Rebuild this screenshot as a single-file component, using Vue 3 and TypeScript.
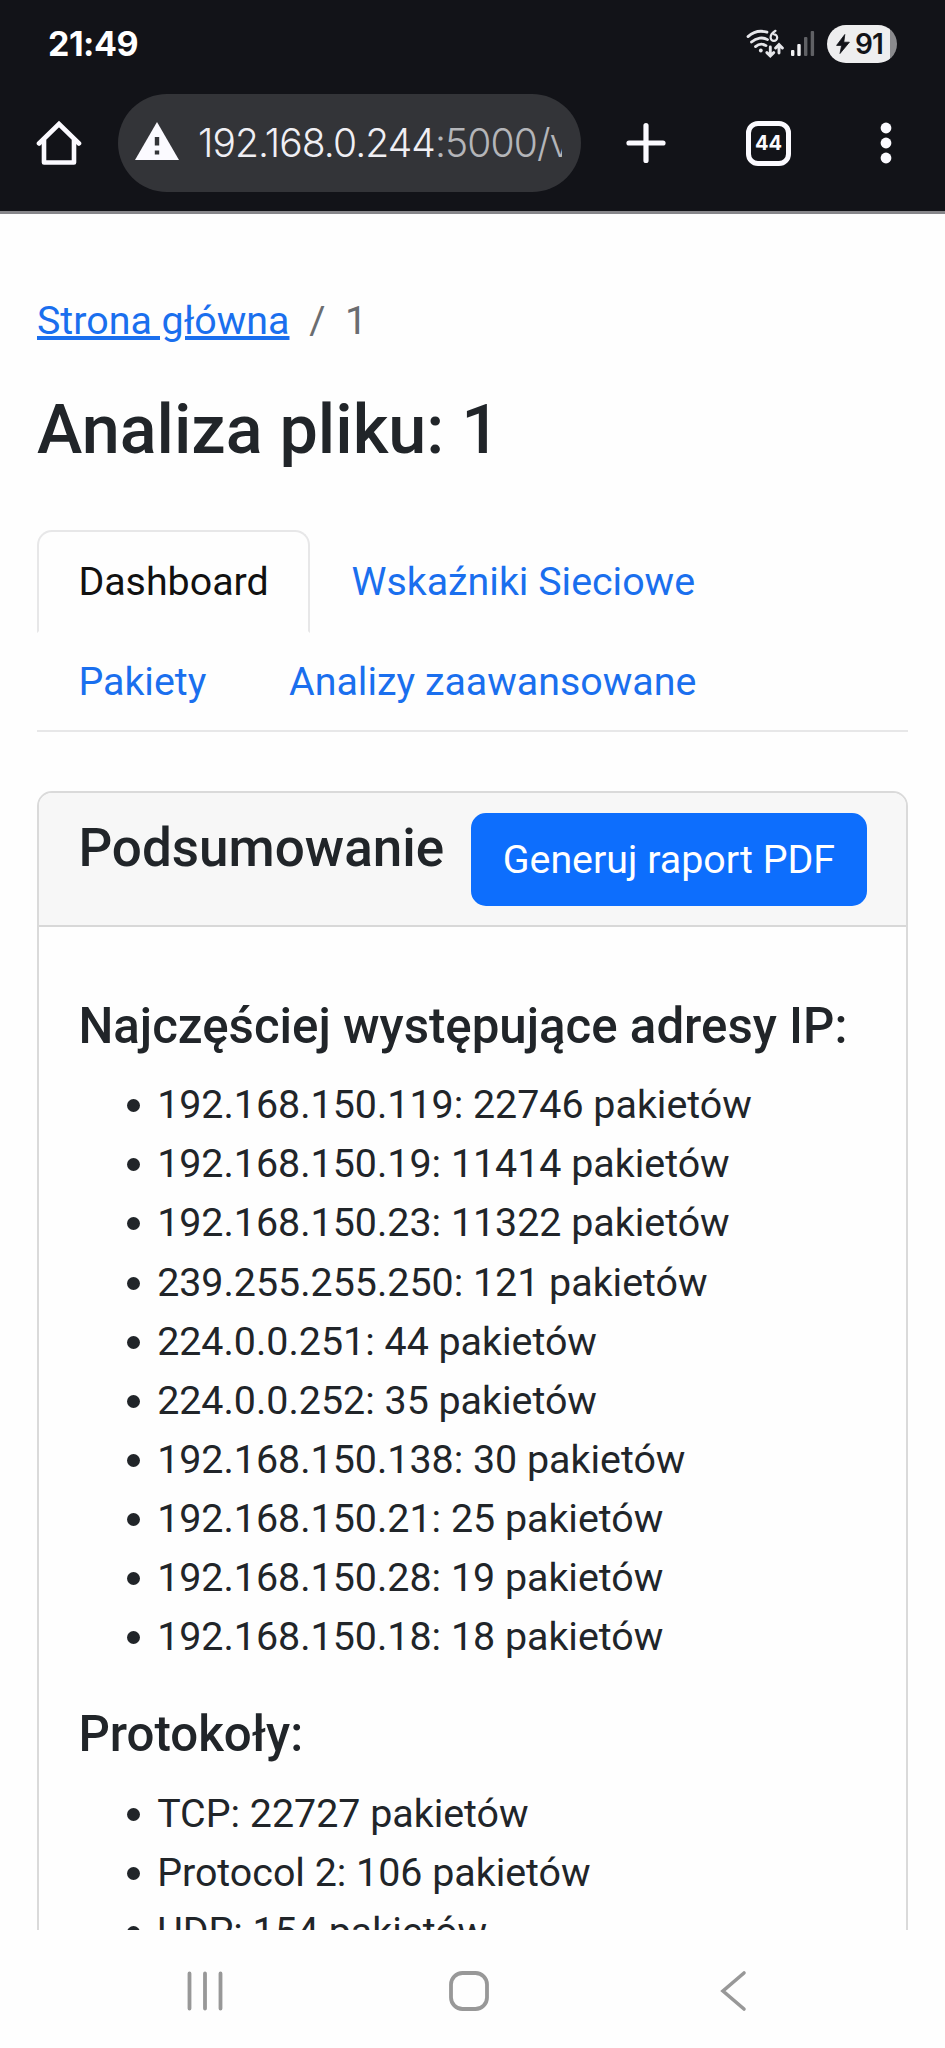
<script setup lang="ts">
interface Entry {
  label: string
  packets: number
}

const addresses: Entry[] = [
  { label: '192.168.150.119', packets: 22746 },
  { label: '192.168.150.19', packets: 11414 },
  { label: '192.168.150.23', packets: 11322 },
  { label: '239.255.255.250', packets: 121 },
  { label: '224.0.0.251', packets: 44 },
  { label: '224.0.0.252', packets: 35 },
  { label: '192.168.150.138', packets: 30 },
  { label: '192.168.150.21', packets: 25 },
  { label: '192.168.150.28', packets: 19 },
  { label: '192.168.150.18', packets: 18 },
]

const protocols: Entry[] = [
  { label: 'TCP', packets: 22727 },
  { label: 'Protocol 2', packets: 106 },
  { label: 'UDP', packets: 154 },
]

const tabs: string[] = ['Dashboard', 'Wskaźniki Sieciowe', 'Pakiety', 'Analizy zaawansowane']
const activeTab = 'Dashboard'
</script>

<template>
  <div class="phone">
    <header class="chrome">
      <div class="status">
        <span class="clock">21:49</span>
        <div class="status-icons">
          <svg class="wifi" width="38" height="30" viewBox="0 0 38 30" fill="none" stroke="#e6e6ea" stroke-linecap="round">
            <path d="M2 7.6C8 2.2 15 1.4 21 3.2" stroke-width="2.8" />
            <path d="M5.5 13C10.5 8.4 17 8 21.5 10.6" stroke-width="2.8" />
            <path d="M9.5 17.6C13 14.6 17 14.8 20 16.6" stroke-width="2.8" />
            <circle cx="14.8" cy="21.5" r="1.9" fill="#e6e6ea" stroke="none" />
            <path d="M29.5 1.8C26.6 3.6 24.6 6 24.6 8.6a3.3 3.3 0 1 0 3.3-3.3" stroke-width="2.2" />
            <path d="M24.3 18v8M20.9 23.6l3.4 3.4 3.4-3.4M33 24v-7.5M29.6 19l3.4-3.4 3.4 3.4" stroke-width="2.9" />
          </svg>
          <svg class="signal" width="26" height="28" viewBox="0 0 26 28">
            <rect x="1" y="20" width="3.4" height="6" rx="1" fill="#f2f2f4" />
            <rect x="7.3" y="14" width="3.4" height="12" rx="1" fill="#f2f2f4" />
            <rect x="14" y="7" width="3.4" height="19" rx="1" fill="#606165" />
            <rect x="20.7" y="1" width="3.4" height="25" rx="1" fill="#606165" />
          </svg>
          <div class="battery">
            <svg width="14" height="20" viewBox="0 0 14 20">
              <path d="M8.8 0.5L0.6 11.4h5L4 19.5L13.4 8.2H7.8z" fill="#121318" stroke="#121318" stroke-width="0.8" />
            </svg>
            <span>91</span>
          </div>
        </div>
      </div>
      <div class="toolbar">
        <svg class="home" width="46" height="46" viewBox="0 0 46 46" fill="none" stroke="#fbfaff" stroke-width="4.6" stroke-linecap="round" stroke-linejoin="round">
          <path d="M3 23.5L23 4L43 23.5" stroke-linejoin="miter" />
          <path d="M8 20v22.5h30V20" />
        </svg>
        <div class="omnibox">
          <svg class="warn" width="46" height="40" viewBox="0 0 46 40">
            <path d="M23 1L45 39H1z" fill="#fbfaff" />
            <path d="M23 16v8.5M23 29.5v4" stroke="#333438" stroke-width="4.4" />
          </svg>
          <span class="url"><span class="host">192.168.0.244</span><span class="path">:5000/v</span></span>
        </div>
        <svg class="plus" width="40" height="42" viewBox="0 0 40 42" stroke="#fbfaff" stroke-width="5.2" stroke-linecap="round">
          <path d="M20 3.5v35M3 21h34" />
        </svg>
        <div class="tab-count">44</div>
        <svg class="kebab" width="12" height="42" viewBox="0 0 12 42" fill="#fbfaff">
          <circle cx="6" cy="6" r="5.4" />
          <circle cx="6" cy="21" r="5.4" />
          <circle cx="6" cy="36" r="5.4" />
        </svg>
      </div>
    </header>

    <main class="page">
      <nav class="breadcrumb">
        <a>Strona główna</a>
        <span class="sep">/</span>
        <span>1</span>
      </nav>
      <h1>Analiza pliku: 1</h1>

      <ul class="tabs">
        <li v-for="tab in tabs" :key="tab" class="tab" :class="{ active: tab === activeTab }">{{ tab }}</li>
      </ul>

      <section class="card">
        <div class="card-header">
          <h4>Podsumowanie</h4>
          <button type="button" class="btn">Generuj raport PDF</button>
        </div>
        <div class="card-body">
          <h5>Najczęściej występujące adresy IP:</h5>
          <ul class="entries">
            <li v-for="entry in addresses" :key="entry.label">{{ entry.label }}: {{ entry.packets }} pakietów</li>
          </ul>
          <h5>Protokoły:</h5>
          <ul class="entries">
            <li v-for="entry in protocols" :key="entry.label">{{ entry.label }}: {{ entry.packets }} pakietów</li>
          </ul>
        </div>
      </section>
    </main>

    <footer class="navbar">
      <svg width="36" height="42" viewBox="0 0 36 42" stroke="#989898" stroke-width="3.8" stroke-linecap="round">
        <path d="M2.5 3.5v35M18 3.5v35M33.5 3.5v35" />
      </svg>
      <svg class="home-key" width="42" height="42" viewBox="0 0 42 42" fill="none" stroke="#989898" stroke-width="3.8">
        <rect x="3" y="3" width="36" height="36" rx="11.5" />
      </svg>
      <svg class="back-key" width="28" height="42" viewBox="0 0 28 42" fill="none" stroke="#989898" stroke-width="3.6" stroke-linecap="round">
        <path d="M25 3L4 21L25 39" />
      </svg>
    </footer>
  </div>
</template>

<style>
html {
  font-size: 39.375px;
}
body {
  margin: 0;
  background: #fff;
}
</style>

<style scoped>
.phone {
  width: 945px;
  height: 2048px;
  display: flex;
  flex-direction: column;
  overflow: hidden;
  background: #fefefe;
  color: #212529;
  font-family: Roboto, "Noto Sans", sans-serif;
  line-height: 1.5;
}
.chrome {
  flex: none;
  box-sizing: border-box;
  height: 214px;
  background: #121318;
  border-bottom: 3px solid #86868a;
  font-family: Inter, Roboto, sans-serif;
}
.status {
  height: 88px;
  padding: 0 48px 0 48px;
  display: flex;
  align-items: center;
  justify-content: space-between;
}
.clock {
  color: #fff;
  font-size: 34px;
  font-weight: 700;
  letter-spacing: -0.5px;
  line-height: 40px;
}
.status-icons {
  display: flex;
  align-items: center;
}
.signal {
  margin-left: 6px;
}
.battery {
  box-sizing: border-box;
  width: 70px;
  height: 38px;
  margin-left: 11px;
  padding-left: 9px;
  border-radius: 19px;
  background: linear-gradient(90deg, #eeeeef 90%, #8b8b8e 90%);
  display: flex;
  align-items: center;
  gap: 5px;
  color: #121318;
  font-size: 28px;
  font-weight: 600;
  letter-spacing: -1px;
  line-height: 38px;
}
.toolbar {
  height: 110px;
  padding: 0 53px 0 36px;
  display: flex;
  align-items: center;
}
.toolbar > svg {
  flex: none;
}
.omnibox {
  flex: none;
  box-sizing: border-box;
  width: 463px;
  height: 98px;
  margin-left: 36px;
  padding: 0 19px 0 16px;
  border-radius: 49px;
  background: #333438;
  display: flex;
  align-items: center;
}
.warn {
  flex: none;
  margin-top: -4px;
}
.url {
  flex: 1;
  margin-left: 18px;
  overflow: hidden;
  white-space: nowrap;
  font-size: 39px;
  line-height: 50px;
  letter-spacing: -0.9px;
  color: #f0eff4;
  font-weight: 350;
}
.path {
  color: #b4b5b9;
}
.plus {
  margin-left: 45px;
}
.tab-count {
  flex: none;
  box-sizing: border-box;
  width: 45px;
  height: 45px;
  margin-left: 80px;
  border: 5px solid #fbfaff;
  border-radius: 12px;
  color: #fbfaff;
  font-size: 20px;
  font-weight: 700;
  line-height: 35px;
  text-align: center;
}
.kebab {
  margin-left: auto;
}
.page {
  flex: none;
  box-sizing: border-box;
  height: 1715.5px;
  padding: 77px 37px 0;
  overflow: hidden;
  font-size: 1rem;
}
.breadcrumb {
  display: flex;
  gap: 0.5rem;
  margin-bottom: 1rem;
  color: #6b6d70;
}
.breadcrumb a {
  color: #1a6fee;
  text-decoration: underline;
  text-decoration-thickness: 4px;
}
h1,
h4,
h5 {
  margin: 0;
  font-weight: 500;
  line-height: 1.2;
}
h1 {
  font-size: 68.3px;
  padding-top: 1px;
  margin-bottom: 58px;
}
h4 {
  font-size: 53px;
  padding-top: 4px;
}
h5 {
  font-size: 1.25rem;
  margin-bottom: 0.5rem;
}
.tabs {
  margin: 0 0 1.5rem;
  padding: 0;
  list-style: none;
  display: flex;
  flex-wrap: wrap;
  border-bottom: 2px solid #e7e7e8;
}
.tab {
  margin-bottom: -2.5px;
  padding: 0.5rem 1rem;
  border: 2px solid transparent;
  border-radius: 15px 15px 0 0;
  color: #1a6fee;
}
.tab.active {
  border-color: #e7e7e8 #e7e7e8 transparent;
  color: #111;
}
.card {
  border: 2px solid #dadada;
  border-radius: 15px;
}
.card-header {
  display: flex;
  align-items: flex-start;
  justify-content: space-between;
  padding: 0.5rem 1rem;
  border-bottom: 2px solid #d8d8d8;
  border-radius: 13px 13px 0 0;
  background: #f7f7f7;
}
.btn {
  flex: none;
  margin: 0;
  padding: 0.375rem 0.75rem;
  border: 2px solid #0d6efd;
  border-radius: 15px;
  background: #0d6efd;
  color: #fff;
  font: inherit;
}
.card-body {
  padding: 1.76rem 1rem 1rem;
}
.entries {
  margin: 0 0 1rem;
  padding-left: 2rem;
  list-style: none;
}
.entries li::before {
  content: "";
  display: inline-block;
  width: 13px;
  height: 13px;
  margin: 0 17px 6px -30px;
  border-radius: 50%;
  background: #212529;
}
.navbar {
  flex: 1;
  display: flex;
  align-items: center;
  padding: 5px 0 0 187px;
}
.home-key {
  margin-left: 225px;
}
.back-key {
  margin-left: 229px;
}
</style>
